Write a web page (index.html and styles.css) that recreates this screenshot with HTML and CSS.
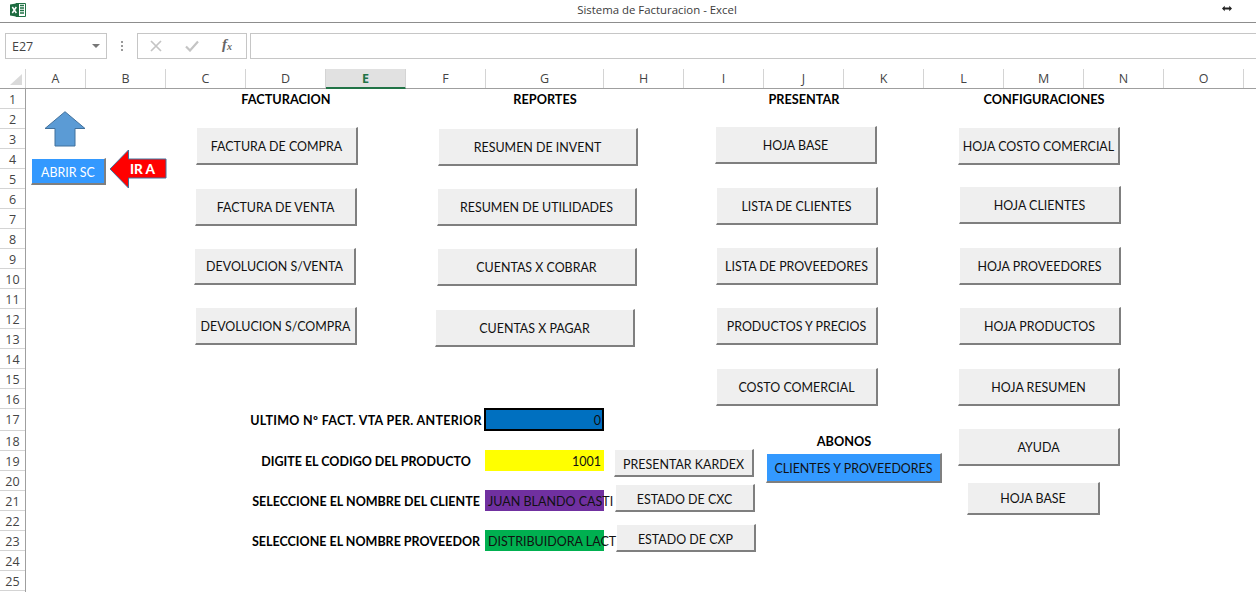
FILE: index.html
```html
<!DOCTYPE html>
<html lang="es">
<head>
<meta charset="utf-8">
<title>Sistema de Facturacion - Excel</title>
<link rel="stylesheet" href="styles.css">
</head>
<body>
<div class="app">
  <header class="titlebar">
    <svg class="xl-logo" viewBox="0 0 16 16" aria-hidden="true">
      <path d="M6 1.5h9.5v13H6z" fill="#fff" stroke="#217346"/>
      <path d="M10 3.5h4M10 6h4M10 8.5h4M10 11h4" stroke="#217346" stroke-width="1.4"/>
      <path d="M0 2.5 9 1v14l-9-1.5z" fill="#1d6b40"/>
      <path d="M2.3 5 6.3 11M6.3 5 2.3 11" stroke="#fff" stroke-width="1.5"/>
    </svg>
    <span class="doc-title">Sistema de Facturacion - Excel</span>
    <svg class="resize" viewBox="0 0 11 7" aria-hidden="true">
      <path d="M0 3.5 3 .5v2h5v-2l3 3-3 3v-2H3v2z" fill="#222"/>
    </svg>
  </header>

  <section class="formula-row">
    <div class="name-box"><span>E27</span><i class="caret"></i></div>
    <div class="grip"><i></i><i></i><i></i></div>
    <div class="fx-tools">
      <svg class="tool" viewBox="0 0 12 12" aria-hidden="true"><path d="M1 1l10 10M11 1 1 11" stroke="#c4c4c4" stroke-width="1.7" fill="none"/></svg>
      <svg class="tool" viewBox="0 0 14 12" aria-hidden="true"><path d="M1 6.5 5 10.500 13 1.500" stroke="#c4c4c4" stroke-width="2.200" fill="none"/></svg>
      <span class="fx">f<sub>x</sub></span>
    </div>
    <div class="formula-input"></div>
  </section>

  <div class="col-head">
    <div class="corner"><i></i></div>
    <div class="col w60">A</div>
    <div class="col">B</div>
    <div class="col">C</div>
    <div class="col">D</div>
    <div class="col active">E</div>
    <div class="col">F</div>
    <div class="col w118">G</div>
    <div class="col">H</div>
    <div class="col">I</div>
    <div class="col">J</div>
    <div class="col">K</div>
    <div class="col">L</div>
    <div class="col">M</div>
    <div class="col">N</div>
    <div class="col">O</div>
  </div>

  <div class="sheet">
    <div class="row-head">
      <div class="row">1</div><div class="row">2</div><div class="row">3</div><div class="row">4</div><div class="row">5</div>
      <div class="row">6</div><div class="row">7</div><div class="row">8</div><div class="row">9</div><div class="row">10</div>
      <div class="row">11</div><div class="row">12</div><div class="row">13</div><div class="row">14</div><div class="row">15</div>
      <div class="row">16</div><div class="row tall">17</div><div class="row">18</div><div class="row">19</div><div class="row">20</div>
      <div class="row">21</div><div class="row">22</div><div class="row">23</div><div class="row">24</div><div class="row">25</div>
    </div>

    <main class="canvas">
      <h2 class="title t-fact">FACTURACION</h2>
      <h2 class="title t-rep">REPORTES</h2>
      <h2 class="title t-pres">PRESENTAR</h2>
      <h2 class="title t-conf">CONFIGURACIONES</h2>
      <h2 class="title t-abon">ABONOS</h2>

      <svg class="arrow-up" viewBox="0 0 42 36" aria-hidden="true">
        <path d="M21 .7 41 17.500H31V35H11V17.500H1z" fill="#5b9bd5" stroke="#41719c"/>
      </svg>
      <svg class="arrow-left" viewBox="0 0 58 40" aria-hidden="true">
        <path d="M1 20 19.500 1v9H57v19H19.500v10z" fill="#ff0000" stroke="#41719c"/>
      </svg>
      <span class="ir-a">IR A</span>
      <div class="btn blue b-abrir">ABRIR SC</div>

      <div class="btn b-compra">FACTURA DE COMPRA</div>
      <div class="btn b-venta">FACTURA DE VENTA</div>
      <div class="btn b-devventa">DEVOLUCION S/VENTA</div>
      <div class="btn b-devcompra">DEVOLUCION S/COMPRA</div>

      <div class="btn wide b-invent">RESUMEN DE INVENT</div>
      <div class="btn wide b-util">RESUMEN DE UTILIDADES</div>
      <div class="btn wide b-cobrar">CUENTAS X COBRAR</div>
      <div class="btn wide b-pagar">CUENTAS X PAGAR</div>

      <div class="btn b-base">HOJA BASE</div>
      <div class="btn b-lcli">LISTA DE CLIENTES</div>
      <div class="btn b-lprov">LISTA DE PROVEEDORES</div>
      <div class="btn b-prod">PRODUCTOS Y PRECIOS</div>
      <div class="btn b-costo">COSTO COMERCIAL</div>

      <div class="btn b-hcosto">HOJA COSTO COMERCIAL</div>
      <div class="btn b-hcli">HOJA CLIENTES</div>
      <div class="btn b-hprov">HOJA PROVEEDORES</div>
      <div class="btn b-hprod">HOJA PRODUCTOS</div>
      <div class="btn b-hres">HOJA RESUMEN</div>
      <div class="btn b-ayuda">AYUDA</div>
      <div class="btn b-hbase">HOJA BASE</div>

      <div class="label l-ultimo">ULTIMO Nº FACT. VTA PER. ANTERIOR</div>
      <div class="label l-digite">DIGITE EL CODIGO DEL PRODUCTO</div>
      <div class="label l-cliente">SELECCIONE EL NOMBRE DEL CLIENTE</div>
      <div class="label l-prov">SELECCIONE EL NOMBRE PROVEEDOR</div>

      <div class="cell c-blue">0</div>
      <div class="cell c-yellow">1001</div>
      <div class="cell c-purple">JUAN BLANDO CASTI</div>
      <div class="cell c-green">DISTRIBUIDORA LACT</div>

      <div class="btn small b-kardex">PRESENTAR KARDEX</div>
      <div class="btn small b-cxc">ESTADO DE CXC</div>
      <div class="btn small b-cxp">ESTADO DE CXP</div>
      <div class="btn blue b-abonos">CLIENTES Y PROVEEDORES</div>
    </main>
  </div>
</div>
</body>
</html>
```
FILE: styles.css
```css
* { box-sizing: border-box; }
html, body { margin: 0; height: 100%; background: #fff; overflow: hidden; }
.app { width: 1256px; height: 592px; display: flex; flex-direction: column; overflow: hidden; font-family: "Open Sans", sans-serif; color: #444; }

/* title bar */
.titlebar { height: 23px; flex: none; border-bottom: 1px solid #8d8d8d; display: flex; align-items: center; position: relative; padding: 0 0 3px 10px; }
.xl-logo { width: 16px; height: 16px; margin-top: 1px; }
.doc-title { position: absolute; left: 0; right: 0; top: 2px; text-align: center; padding-left: 58px; font-size: 11.400px; line-height: 15px; color: #3c3c3c; }
.resize { position: absolute; left: 1222px; top: 5px; width: 10px; height: 7px; }

/* formula bar */
.formula-row { height: 46px; flex: none; display: flex; align-items: flex-start; padding: 10px 0 0 5px; }
.name-box { width: 102px; height: 26px; border: 1px solid #c6c6c6; display: flex; align-items: center; justify-content: space-between; padding: 0 6px 0 6px; font-size: 12.500px; color: #444; }
.caret { width: 0; height: 0; border-left: 4px solid transparent; border-right: 4px solid transparent; border-top: 4px solid #777; }
.grip { width: 30px; height: 26px; display: flex; flex-direction: column; align-items: center; justify-content: center; gap: 2px; }
.grip i { width: 2px; height: 2px; background: #9a9a9a; }
.fx-tools { width: 110px; height: 26px; border: 1px solid #c6c6c6; display: flex; align-items: center; padding-left: 12px; }
.tool { width: 12px; height: 12px; flex: none; }
.tool + .tool { width: 14px; margin-left: 23px; }
.fx { margin-left: 23px; margin-bottom: 3px; font: italic bold 15px/1 "Liberation Serif", serif; color: #666; }
.fx sub { font-size: 10px; vertical-align: -1px; }
.formula-input { flex: 1; height: 26px; margin-left: 3px; border-top: 1px solid #c6c6c6; border-bottom: 1px solid #c6c6c6; border-left: 1px solid #c6c6c6; }

/* column headers */
.col-head { height: 20px; flex: none; display: flex; border-bottom: 1px solid #9f9f9f; }
.corner { width: 26px; flex: none; border-right: 1px solid #d4d4d4; position: relative; }
.corner i { position: absolute; left: 10px; top: 5px; width: 0; height: 0; border-style: solid; border-width: 0 0 11px 12px; border-color: transparent transparent #dadada transparent; }
.col { width: 80px; flex: none; border-right: 1px solid #d4d4d4; text-align: center; font-size: 12.500px; line-height: 19px; color: #444; }
.col.w60 { width: 60px; }
.col.w118 { width: 118px; }
.col.active { background: #e1e1e1; color: #217346; font-weight: 700; border-bottom: 2px solid #217346; height: 20px; }

/* sheet */
.sheet { flex: 1; display: flex; min-height: 0; }
.row-head { width: 26px; flex: none; border-right: 1px solid #9f9f9f; }
.row { height: 20px; border-bottom: 1px solid #d4d4d4; text-align: center; font-size: 12.500px; line-height: 21px; color: #444; }
.row.tall { height: 22px; }
.canvas { flex: 1; position: relative; font-family: Lato, "Liberation Sans", sans-serif; color: #111; }

/* headings and labels */
.title { position: absolute; margin: 0; top: 0; width: 200px; height: 20px; text-align: center; font-size: 12.700px; line-height: 20px; font-weight: 700; color: #000; }
.t-fact { left: 160px; }
.t-rep { left: 419px; }
.t-pres { left: 678px; }
.t-conf { left: 918px; }
.t-abon { left: 718px; top: 342px; }
.label { position: absolute; left: 190px; width: 300px; height: 20px; text-align: center; font-size: 12.500px; line-height: 20px; font-weight: 700; color: #000; white-space: nowrap; }
.l-ultimo { top: 322px; letter-spacing: .3px; }
.l-digite { top: 363px; }
.l-cliente { top: 403px; }
.l-prov { top: 443px; }

/* value cells */
.cell { position: absolute; left: 459px; width: 119px; height: 21px; font-size: 12.500px; line-height: 24px; color: #111; white-space: nowrap; padding: 0 3px; }
.c-blue { left: 458px; top: 319px; width: 120px; height: 23px; background: #0070c0; border: 2px solid #000; text-align: right; line-height: 22px; padding: 0 1px; }
.c-yellow { top: 361px; background: #ff0; text-align: right; }
.c-purple { top: 401px; background: #7030a0; }
.c-green { top: 441px; background: #00b050; }

/* buttons */
.btn { position: absolute; width: 162px; height: 38px; padding-top: 2px; border-style: solid; border-width: 1px 2px 2px 1px; border-color: transparent #7f7f7f #7f7f7f transparent; background: #efefef; background-clip: padding-box; display: flex; align-items: center; justify-content: center; font-size: 12.450px; color: #111; white-space: nowrap; }
.btn.wide { width: 200px; }
.btn.small { width: 140px; height: 28px; padding-top: 4px; }
.btn.blue { background-color: #3399ff; background-clip: padding-box; }
.b-compra { left: 170px; top: 38px; }
.b-venta { left: 169px; top: 99px; }
.b-devventa { left: 168px; top: 159px; height: 37px; padding-top: 0; }
.b-devcompra { left: 169px; top: 218px; }
.b-invent { left: 412px; top: 39px; }
.b-util { left: 411px; top: 99px; }
.b-cobrar { left: 411px; top: 159px; }
.b-pagar { left: 409px; top: 220px; }
.b-base { left: 689px; top: 37px; }
.b-lcli { left: 690px; top: 98px; }
.b-lprov { left: 690px; top: 158px; }
.b-prod { left: 690px; top: 218px; }
.b-costo { left: 690px; top: 279px; }
.b-hcosto { left: 932px; top: 38px; }
.b-hcli { left: 933px; top: 97px; }
.b-hprov { left: 933px; top: 158px; }
.b-hprod { left: 933px; top: 218px; }
.b-hres { left: 932px; top: 279px; }
.b-ayuda { left: 932px; top: 339px; }
.b-hbase { left: 941px; top: 393px; width: 133px; height: 33px; padding-top: 0; }
.b-kardex { left: 588px; top: 360px; }
.b-cxc { left: 589px; top: 395px; }
.b-cxp { left: 590px; top: 435px; }
.b-abonos { left: 740px; top: 364px; width: 176px; height: 30px; }
.b-abrir { left: 5px; top: 69px; width: 75px; height: 27px; padding-top: 2px; color: #fff; }

/* arrows */
.arrow-up { position: absolute; left: 18px; top: 22px; width: 42px; height: 36px; }
.arrow-left { position: absolute; left: 83px; top: 60px; width: 58px; height: 40px; }
.ir-a { position: absolute; left: 104px; top: 71px; font-size: 13.500px; line-height: 18px; font-weight: 900; color: #fff; }
```
